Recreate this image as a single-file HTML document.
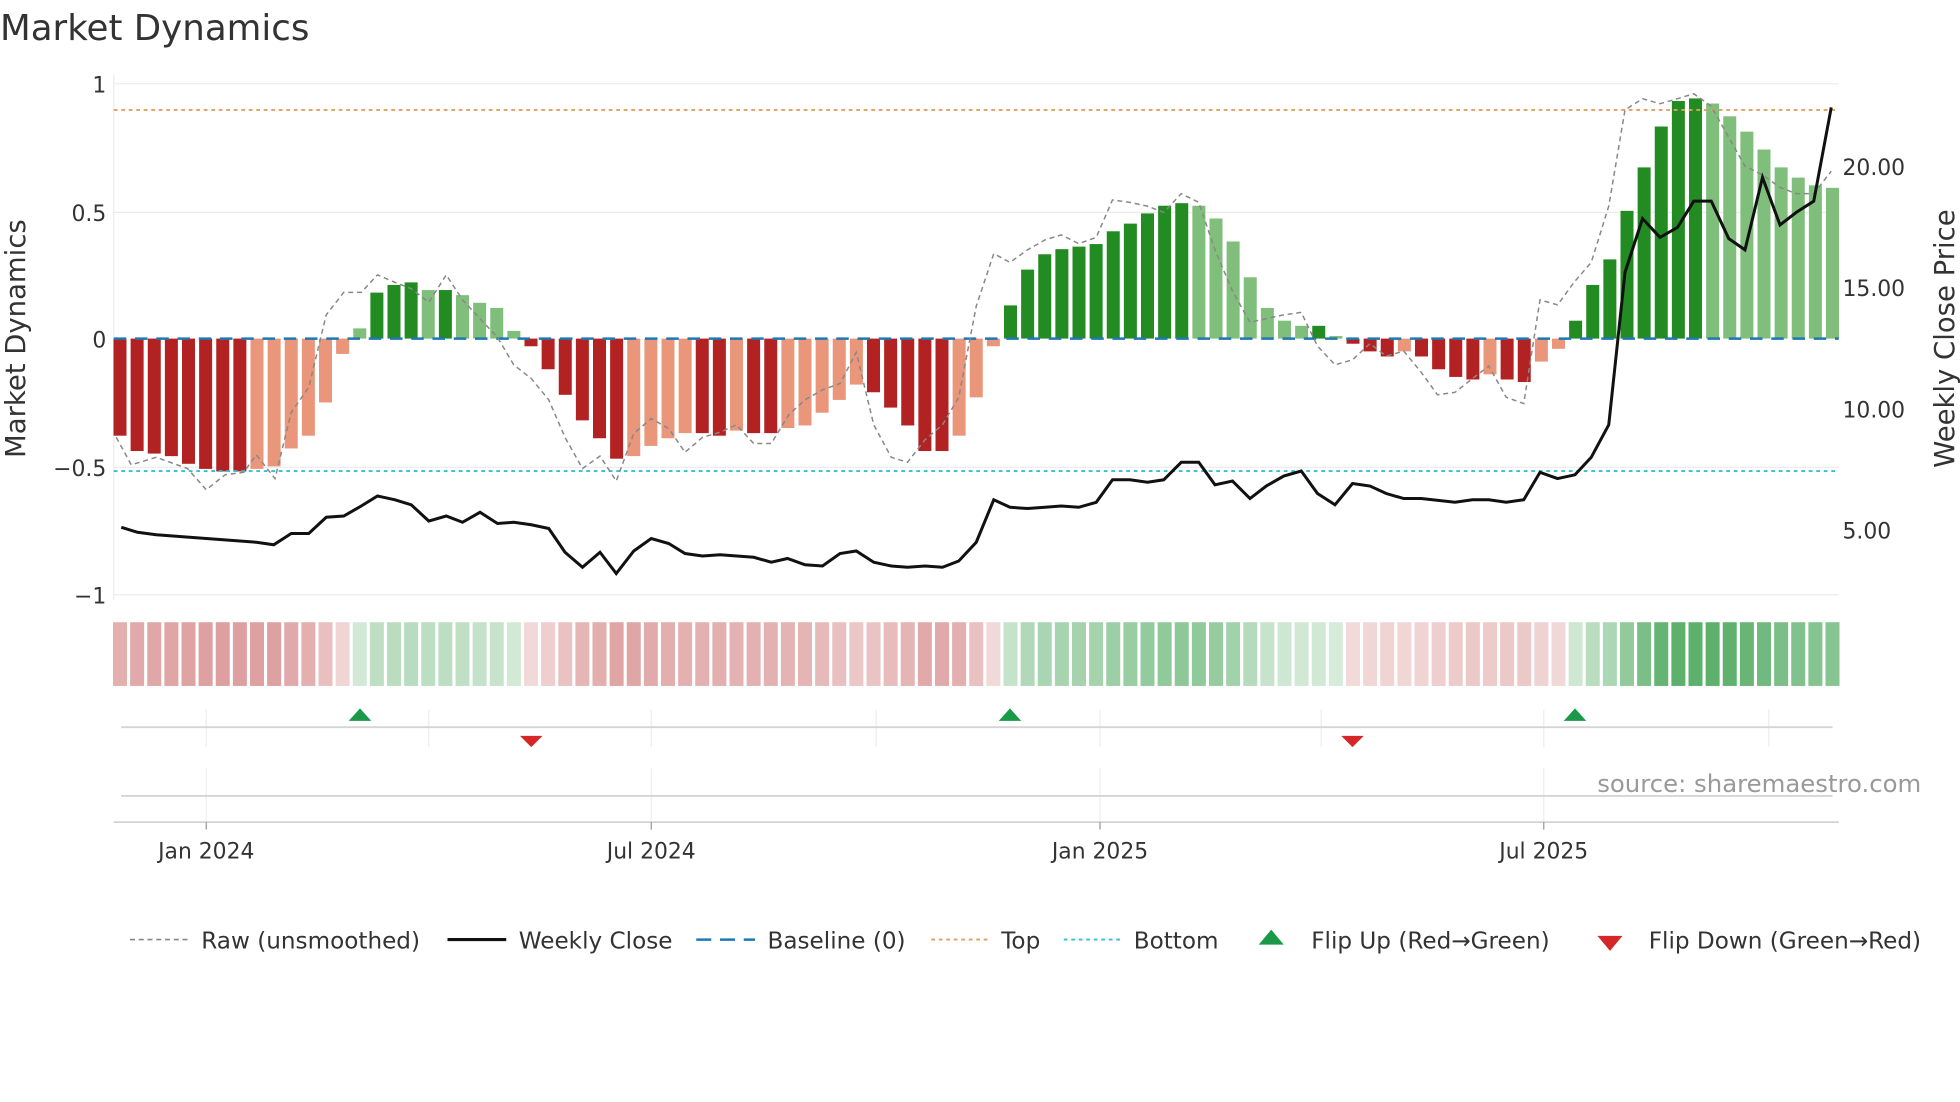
<!DOCTYPE html>
<html><head><meta charset="utf-8"><style>
html,body{margin:0;padding:0;background:#fff;}
svg{display:block;font-family:"DejaVu Sans","Liberation Sans",sans-serif;}
</style></head><body>
<svg id="s" width="1960" height="1102" viewBox="0 0 1568 882" preserveAspectRatio="none" xmlns="http://www.w3.org/2000/svg">
<text x="0" y="32" font-size="28.5" fill="#333">Market Dynamics</text>
<g stroke="#ebebeb" stroke-width="1">
<line x1="91" x2="1471" y1="67" y2="67"/><line x1="91" x2="1471" y1="170" y2="170"/>
<line x1="91" x2="1471" y1="374" y2="374"/><line x1="91" x2="1471" y1="476" y2="476"/>
<line x1="91" x2="91" y1="60" y2="480"/>
</g>
<g font-size="17.5" fill="#333" text-anchor="end">
<text x="85" y="74">1</text><text x="85" y="177">0.5</text><text x="85" y="278">0</text><text x="85" y="381">−0.5</text><text x="85" y="483">−1</text>
</g>
<g font-size="17.5" fill="#333">
<text x="1474" y="140">20.00</text><text x="1474" y="237">15.00</text><text x="1474" y="334">10.00</text><text x="1474" y="431">5.00</text>
</g>
<text transform="translate(20,271) rotate(-90)" font-size="22" fill="#333" text-anchor="middle">Market Dynamics</text>
<text transform="translate(1563,271) rotate(-90)" font-size="22" fill="#333" text-anchor="middle">Weekly Close Price</text>
<g id="bars"></g>
<line x1="91" x2="1471" y1="88" y2="88" stroke="#e0a060" stroke-width="1.5" stroke-dasharray="3,3"/>
<line x1="91" x2="1471" y1="377" y2="377" stroke="#2ec4d4" stroke-width="1.5" stroke-dasharray="3,3"/>
<line x1="91" x2="1471" y1="271" y2="271" stroke="#1f77b4" stroke-width="2" stroke-dasharray="10,7"/>
<polyline id="raw" fill="none" stroke="#888" stroke-width="1.2" stroke-dasharray="4,3"/>
<polyline id="close" fill="none" stroke="#111" stroke-width="2.4"/>
<g id="strip"></g>
<g stroke="#eee"><line x1="165" x2="165" y1="568" y2="598"/><line x1="343" x2="343" y1="568" y2="598"/><line x1="521" x2="521" y1="568" y2="598"/><line x1="701" x2="701" y1="568" y2="598"/><line x1="880" x2="880" y1="568" y2="598"/><line x1="1057" x2="1057" y1="568" y2="598"/><line x1="1235" x2="1235" y1="568" y2="598"/><line x1="1415" x2="1415" y1="568" y2="598"/>
<line x1="165" x2="165" y1="615" y2="658"/><line x1="521" x2="521" y1="615" y2="658"/><line x1="880" x2="880" y1="615" y2="658"/><line x1="1235" x2="1235" y1="615" y2="658"/></g>
<line x1="97" x2="1466" y1="582" y2="582" stroke="#d5d5d5" stroke-width="1.5"/>
<line x1="97" x2="1466" y1="637" y2="637" stroke="#d5d5d5" stroke-width="1.5"/>
<line x1="91" x2="1471" y1="658" y2="658" stroke="#ccc" stroke-width="1.2"/>
<g fill="#1a9a48"><path d="M288 567 L297 577 L279 577Z"/><path d="M808 567 L817 577 L799 577Z"/><path d="M1260 567 L1269 577 L1251 577Z"/></g>
<g fill="#d62728"><path d="M425 598 L434 589 L416 589Z"/><path d="M1082 598 L1091 589 L1073 589Z"/></g>
<g stroke="#999"><line x1="165" x2="165" y1="658" y2="664"/><line x1="521" x2="521" y1="658" y2="664"/><line x1="880" x2="880" y1="658" y2="664"/><line x1="1235" x2="1235" y1="658" y2="664"/></g>
<g font-size="17.5" fill="#333" text-anchor="middle"><text x="165" y="687">Jan 2024</text><text x="521" y="687">Jul 2024</text><text x="880" y="687">Jan 2025</text><text x="1235" y="687">Jul 2025</text></g>
<text x="1537" y="634" font-size="19.5" fill="#999" text-anchor="end">source: sharemaestro.com</text>
<g font-size="18.5" fill="#333">
<line x1="104" x2="150" y1="752" y2="752" stroke="#888" stroke-width="1.3" stroke-dasharray="4,3"/><text x="161" y="759">Raw (unsmoothed)</text>
<line x1="358" x2="405" y1="752" y2="752" stroke="#111" stroke-width="2.5"/><text x="415" y="759">Weekly Close</text>
<line x1="557" x2="604" y1="752" y2="752" stroke="#1f77b4" stroke-width="2" stroke-dasharray="12,7"/><text x="614" y="759">Baseline (0)</text>
<line x1="745" x2="790" y1="752" y2="752" stroke="#e0a060" stroke-width="1.5" stroke-dasharray="3,3"/><text x="801" y="759">Top</text>
<line x1="851" x2="896" y1="752" y2="752" stroke="#2ec4d4" stroke-width="1.5" stroke-dasharray="3,3"/><text x="907" y="759">Bottom</text>
<path d="M1017 744 L1027 756 L1007 756Z" fill="#1a9a48"/><text x="1049" y="759">Flip Up (Red→Green)</text>
<path d="M1288 761 L1298 749 L1278 749Z" fill="#d62728"/><text x="1319" y="759">Flip Down (Green→Red)</text>
</g>
</svg>
<script>
var v=[-0.38,-0.44,-0.45,-0.46,-0.49,-0.51,-0.52,-0.52,-0.51,-0.5,-0.43,-0.38,-0.25,-0.06,0.04,0.18,0.21,0.22,0.19,0.19,0.17,0.14,0.12,0.03,-0.03,-0.12,-0.22,-0.32,-0.39,-0.47,-0.46,-0.42,-0.39,-0.37,-0.37,-0.38,-0.36,-0.37,-0.37,-0.35,-0.34,-0.29,-0.24,-0.18,-0.21,-0.27,-0.34,-0.44,-0.44,-0.38,-0.23,-0.03,0.13,0.27,0.33,0.35,0.36,0.37,0.42,0.45,0.49,0.52,0.53,0.52,0.47,0.38,0.24,0.12,0.07,0.05,0.05,0.01,-0.02,-0.05,-0.07,-0.05,-0.07,-0.12,-0.15,-0.16,-0.14,-0.16,-0.17,-0.09,-0.04,0.07,0.21,0.31,0.5,0.67,0.83,0.93,0.94,0.92,0.87,0.81,0.74,0.67,0.63,0.6,0.59];
var s="",st="";
for(var i=0;i<v.length;i++){var x=96+13.7*i,val=v[i],prev=i?v[i-1]:val;
var rising=Math.abs(val)>=Math.abs(prev);
var c=val>=0?(rising?"#228b22":"#7fbf7b"):(rising?"#b22222":"#e9967a");
var y0=271,y1=271-val*204.5;s+='<rect x="'+(x-5.2)+'" y="'+Math.min(y0,y1)+'" width="10.4" height="'+Math.max(1,Math.abs(y1-y0))+'" fill="'+c+'"/>';
var a=Math.min(1,0.25+Math.abs(val)*0.85);var col=val>=0?"rgba(40,150,60,"+(a*0.75)+")":"rgba(190,70,70,"+(a*0.75)+")";
st+='<rect x="'+(x-5.6)+'" y="498" width="11.2" height="51" fill="'+col+'"/>';}
document.getElementById("bars").innerHTML=s;document.getElementById("strip").innerHTML=st;
var close=[[97,422],[110,426],[125,428],[165,431],[205,434],[219,436],[233,427],[247,427],[261,414],[275,413],[289,405],[302,397],[316,400],[329,404],[343,417],[357,413],[370,418],[384,410],[398,419],[411,418],[425,420],[439,423],[452,442],[466,454],[480,442],[493,459],[507,441],[521,431],[535,435],[548,443],[562,445],[576,444],[603,446],[617,450],[630,447],[644,452],[658,453],[672,443],[685,441],[699,450],[713,453],[726,454],[740,453],[754,454],[767,449],[781,434],[795,400],[808,406],[822,407],[836,406],[849,405],[863,406],[877,402],[890,384],[904,384],[918,386],[931,384],[945,370],[959,370],[972,388],[986,385],[1000,399],[1013,389],[1027,381],[1041,377],[1054,395],[1068,404],[1082,387],[1096,389],[1109,395],[1123,399],[1137,399],[1164,402],[1178,400],[1191,400],[1205,402],[1219,400],[1232,378],[1246,383],[1260,380],[1273,366],[1287,340],[1300,218],[1314,175],[1328,190],[1342,182],[1355,161],[1369,161],[1383,191],[1396,200],[1410,142],[1424,180],[1437,170],[1451,161],[1465,86]];
var raw=[[93,350],[105,372],[125,366],[150,375],[165,392],[180,380],[195,378],[205,364],[220,383],[233,330],[247,310],[261,252],[275,234],[289,234],[302,220],[316,226],[329,231],[343,242],[357,220],[370,240],[384,255],[398,270],[411,292],[425,303],[439,320],[452,350],[466,375],[480,365],[493,385],[507,347],[521,335],[535,343],[548,362],[562,350],[576,346],[589,340],[603,355],[617,355],[631,332],[644,320],[658,312],[672,307],[685,282],[699,340],[713,366],[726,370],[740,352],[754,340],[767,318],[781,245],[795,203],[808,210],[822,200],[836,192],[849,188],[863,195],[877,190],[890,160],[904,162],[918,165],[931,170],[945,155],[959,162],[972,200],[986,233],[1000,258],[1013,255],[1027,252],[1041,250],[1054,277],[1068,292],[1082,288],[1096,275],[1109,285],[1123,281],[1137,298],[1150,316],[1164,314],[1178,303],[1191,293],[1205,318],[1219,323],[1232,240],[1246,244],[1260,225],[1273,210],[1287,165],[1300,88],[1314,79],[1328,83],[1342,79],[1355,75],[1369,85],[1383,110],[1396,133],[1410,140],[1424,150],[1437,155],[1451,155],[1465,137]];
document.getElementById("close").setAttribute("points",close.join(" "));
document.getElementById("raw").setAttribute("points",raw.join(" "));
</script>
</body></html>
